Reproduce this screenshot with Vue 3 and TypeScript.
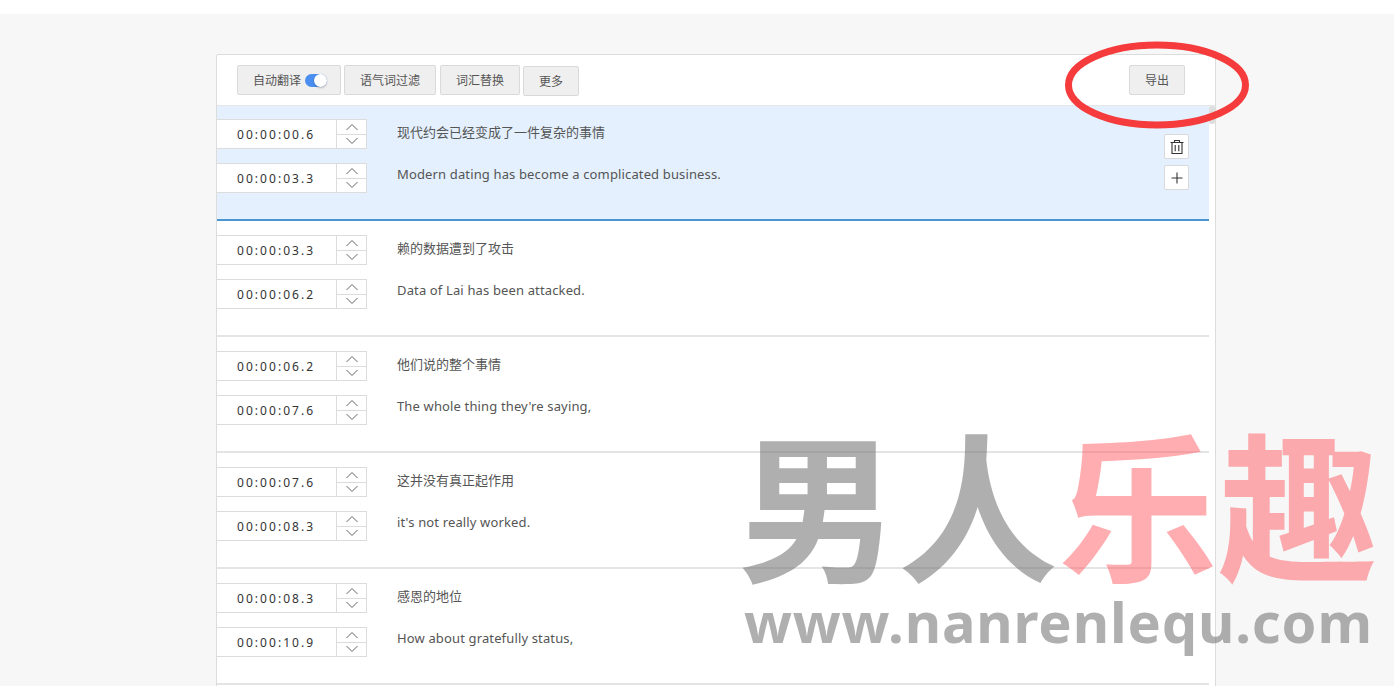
<script setup lang="ts">
interface Row { start: string; end: string; zh: string; en: string }
const rows: Row[] = [
  { start: '00:00:00.6', end: '00:00:03.3', zh: '现代约会已经变成了一件复杂的事情', en: 'Modern dating has become a complicated business.' },
  { start: '00:00:03.3', end: '00:00:06.2', zh: '赖的数据遭到了攻击', en: 'Data of Lai has been attacked.' },
  { start: '00:00:06.2', end: '00:00:07.6', zh: '他们说的整个事情', en: "The whole thing they're saying," },
  { start: '00:00:07.6', end: '00:00:08.3', zh: '这并没有真正起作用', en: "it's not really worked." },
  { start: '00:00:08.3', end: '00:00:10.9', zh: '感恩的地位', en: 'How about gratefully status,' },
]
</script>

<template>
  <div class="page">
    <div class="top-strip"></div>
    <div class="card">
      <div class="toolbar">
        <button class="btn auto">自动翻译<span class="toggle"><span class="knob"></span></span></button>
        <button class="btn filter">语气词过滤</button>
        <button class="btn swap">词汇替换</button>
        <button class="btn more">更多</button>
        <button class="btn export">导出</button>
      </div>
      <div class="body">
        <div class="list">
          <div v-for="(r, i) in rows" :key="i" class="row" :class="{ active: i === 0 }">
            <div class="times">
              <div v-for="t in [r.start, r.end]" :key="t" class="time">
                <span class="value">{{ t }}</span>
                <span class="stepper">
                  <span class="step"><svg width="14" height="8" viewBox="0 0 14 8"><path d="M1.5 7 7 1.5 12.5 7" /></svg></span>
                  <span class="step"><svg width="14" height="8" viewBox="0 0 14 8"><path d="M1.5 1 7 6.5 12.5 1" /></svg></span>
                </span>
              </div>
            </div>
            <div class="texts">
              <div class="line zh">{{ r.zh }}</div>
              <div class="line en">{{ r.en }}</div>
            </div>
            <div v-if="i === 0" class="actions">
              <button class="act" aria-label="删除">
                <svg width="16" height="16" viewBox="0 0 16 16"><path d="M1.5 3.5h13M5.5 3V1.5h5V3M3 3.5V14.5h10V3.5M6.2 6v6.3M9.8 6v6.3" /></svg>
              </button>
              <button class="act" aria-label="添加">
                <svg width="14" height="14" viewBox="0 0 14 14"><path d="M7 1.5v11M1.5 7h11" /></svg>
              </button>
            </div>
          </div>
        </div>
        <div class="scrollbar"><div class="thumb"></div></div>
      </div>
    </div>

    <svg class="circle" width="200" height="100" viewBox="0 0 200 100">
      <ellipse cx="100" cy="50" rx="88.5" ry="40" />
    </svg>

    <div class="watermark">
      <div class="wm-title"><span class="grey">男人</span><span class="pink">乐趣</span></div>
      <div class="wm-url">www.nanrenlequ.com</div>
    </div>
  </div>
</template>

<style scoped>
.page {
  position: relative;
  height: 686px;
  overflow: hidden;
  background: #f7f7f7;
  font-family: "Noto Sans", "Noto Sans CJK SC", sans-serif;
  color: #555;
}
.top-strip {
  height: 14px;
  background: #fff;
}
.card {
  box-sizing: border-box;
  width: 1000px;
  height: 680px;
  margin: 40px 0 0 216px;
  background: #fff;
  border: 1px solid #dcdcdc;
  border-radius: 2px 2px 0 0;
}
.toolbar {
  box-sizing: border-box;
  display: flex;
  align-items: flex-start;
  height: 51px;
  padding: 10px 30px 0 20px;
  border-bottom: 1px solid #e6e6e6;
}
.btn {
  box-sizing: border-box;
  display: flex;
  align-items: center;
  justify-content: center;
  height: 30px;
  padding: 0 0 2px;
  background: #efefef;
  border: 1px solid #d9d9d9;
  border-radius: 2px;
  color: #555;
  font-family: "Noto Sans CJK SC", sans-serif;
  font-size: 12px;
}
.auto { width: 104px; margin-right: 3px; gap: 4px; padding-left: 2px; }
.filter { width: 92px; margin-right: 4px; }
.swap { width: 80px; margin-right: 3px; }
.more { width: 56px; margin-top: 1px; }
.export { width: 56px; margin-left: auto; }
.toggle {
  position: relative;
  display: inline-block;
  width: 22px;
  height: 13px;
  margin-top: 2px;
  border-radius: 7px;
  background: #4a8ff0;
}
.knob {
  position: absolute;
  right: 0;
  top: 0;
  width: 13px;
  height: 13px;
  border-radius: 50%;
  background: #fff;
  box-shadow: 0 1px 2px rgba(0, 0, 0, .25);
}
.body {
  display: flex;
}
.list {
  flex: 1;
  min-width: 0;
}
.scrollbar {
  width: 6px;
  background: #fff;
}
.thumb {
  width: 6px;
  height: 18px;
  background: #dedede;
  border-radius: 2px;
}
.row {
  box-sizing: border-box;
  display: flex;
  height: 116px;
  padding-top: 14px;
  border-bottom: 2px solid #e4e4e4;
}
.row.active {
  height: 115px;
  padding-top: 13px;
  background: #e4f0fe;
  border-bottom-color: #4a96d0;
}
.times {
  display: flex;
  flex-direction: column;
  gap: 14px;
  width: 150px;
  flex: none;
}
.time {
  box-sizing: border-box;
  display: flex;
  height: 30px;
  background: #fff;
  border: 1px solid #dcdcdc;
  border-left: 0;
}
.value {
  box-sizing: border-box;
  width: 120px;
  padding-left: 20px;
  line-height: 29px;
  font-size: 12px;
  letter-spacing: 2.05px;
  color: #333;
  border-right: 1px solid #dcdcdc;
}
.stepper {
  flex: 1;
  display: flex;
  flex-direction: column;
}
.step {
  flex: 1;
  display: flex;
  align-items: center;
  justify-content: center;
}
.step + .step {
  border-top: 1px solid #dcdcdc;
}
.step path {
  fill: none;
  stroke: #666;
  stroke-width: 1;
}
.texts {
  flex: 1;
  margin-left: 30px;
}
.line {
  height: 28px;
  line-height: 28px;
  font-size: 13px;
  color: #555;
}
.line.zh {
  line-height: 27px;
}
.line.en {
  margin-top: 13px;
  letter-spacing: .14px;
}
.actions {
  display: flex;
  flex-direction: column;
  gap: 6px;
  width: 25px;
  margin: 15px 20px 0 0;
}
.act {
  box-sizing: border-box;
  display: flex;
  align-items: center;
  justify-content: center;
  width: 25px;
  height: 25px;
  padding: 0;
  background: #fff;
  border: 1px solid #d9d9d9;
  border-radius: 2px;
}
.act path {
  fill: none;
  stroke: #333;
  stroke-width: 1.1;
}
.circle {
  position: absolute;
  left: 1057px;
  top: 35px;
}
.circle ellipse {
  fill: none;
  stroke: #f53b3b;
  stroke-width: 7;
}
.watermark {
  position: absolute;
  left: 738px;
  top: 405px;
  width: 640px;
  font-family: "Noto Sans CJK SC", sans-serif;
  font-weight: 700;
  pointer-events: none;
  filter: blur(.4px);
}
.wm-title {
  display: flex;
  height: 190px;
  font-size: 160px;
  line-height: 190px;
  white-space: nowrap;
}
.grey { color: rgba(115, 115, 115, .57); }
.pink { color: rgba(255, 80, 90, .47); }
.wm-url {
  margin-top: -4px;
  padding-left: 6px;
  font-family: "Noto Sans", sans-serif;
  font-size: 56px;
  line-height: 60px;
  letter-spacing: .85px;
  color: rgba(115, 115, 115, .57);
  white-space: nowrap;
}
</style>

<style>
html, body { margin: 0; overflow: hidden; }
</style>
